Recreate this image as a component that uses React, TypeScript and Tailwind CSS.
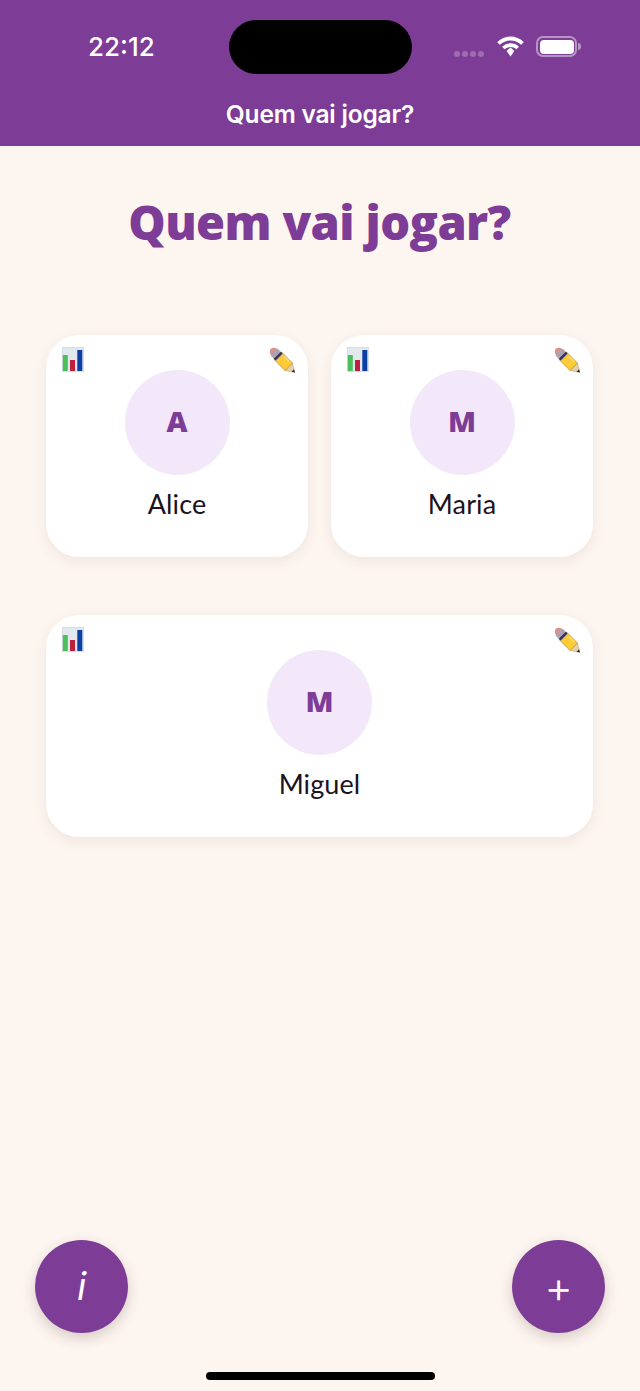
import React from "react";

interface Player {
  name: string;
  wide?: boolean;
}

const players: Player[] = [
  { name: "Alice" },
  { name: "Maria" },
  { name: "Miguel", wide: true },
];

const ChartIcon = () => (
  <svg width="22" height="25" viewBox="0 0 22 25" className="block">
    <rect x="0.25" y="0.25" width="21.5" height="24.5" fill="#e1e8ee" stroke="#c9d0d6" strokeWidth="0.5" />
    <rect x="0.8" y="8" width="5" height="16" fill="#4cbf5c" />
    <rect x="8" y="13" width="5" height="11" fill="#bd1f3c" />
    <rect x="15.3" y="3" width="5" height="21" fill="#0b3fa3" />
  </svg>
);

const PencilIcon = () => (
  <svg width="27" height="27" viewBox="0 0 27 27" className="block">
    <path d="M23.5 16 L25.8 25.5 L16 23.5 Z" fill="#e3cfa8" stroke="#a58a5c" strokeWidth="0.4" />
    <path d="M25.8 25.5 L22.6 24.8 L25.1 22.3 Z" fill="#2a2140" />
    <path d="M12.5 5 L23.5 16 L16 23.5 L5 12.5 Z" fill="#fdcb33" stroke="#a87d28" strokeWidth="0.6" />
    <path d="M15 9.5 L20 14.5" stroke="#fbe08a" strokeWidth="1.2" />
    <circle cx="4.8" cy="4.8" r="4" fill="#d8938a" />
    <path d="M8.5 1.5 L14 7 L7 14 L1.5 8.5 Z" fill="#a9a3b8" />
    <path d="M11.8 4.8 L13.5 6.5 L6.5 13.5 L4.8 11.8 Z" fill="#3a3350" />
    <path d="M2.5 2.5 C3.5 1 5.5 0.7 7 1.5 L1.8 6.8 C1 5.5 1.5 3.5 2.5 2.5 Z" fill="#d8938a" />
  </svg>
);

const WifiIcon = () => (
  <svg width="27" height="21" viewBox="0 0 27 21" className="block">
    <path d="M1.5 7.5 C8.5 0.8 18.5 0.8 25.5 7.5" fill="none" stroke="white" strokeWidth="3.8" />
    <path d="M6.3 12 C10.5 8.2 16.5 8.2 20.7 12" fill="none" stroke="white" strokeWidth="3.6" />
    <path d="M9.6 15 L13.5 11.4 L17.4 15 L13.5 20.5 Z" fill="white" />
  </svg>
);

const PlayerCard = ({ name, wide }: Player) => (
  <div
    className={`relative h-[222px] rounded-[33px] bg-white pt-[35px] flex flex-col items-center shadow-[0_4px_14px_rgba(80,50,40,0.08)] ${
      wide ? "col-span-2" : ""
    }`}
  >
    <div className="absolute left-[16px] top-[12px]">
      <ChartIcon />
    </div>
    <div className="absolute right-[12px] top-[12px]">
      <PencilIcon />
    </div>
    <div className="w-[105px] h-[105px] rounded-full bg-[#f2e8f9] flex items-center justify-center pb-[3px] text-[#7d3c96] text-[29px] font-extrabold font-['Open_Sans',sans-serif]">
      {name[0]}
    </div>
    <p className="mt-[11px] text-[27px] leading-[36px] tracking-[0.1px] text-[#1c1220] font-['Lato',sans-serif]">
      {name}
    </p>
  </div>
);

const App: React.FC = () => {
  return (
    <div className="relative h-[1391px] overflow-hidden bg-[#fdf5f0] flex flex-col">
      <header className="h-[146px] bg-[#7d3c96] text-white font-['Inter',sans-serif]">
        <div className="relative h-[94px] pt-[20px]">
          <span className="absolute left-[88px] top-[31px] text-[26px] leading-[32px] font-medium">22:12</span>
          <div className="mx-auto w-[183px] h-[54px] rounded-[27px] bg-black" />
          <div className="absolute left-[454px] top-[51px] flex gap-[2.5px]">
            <span className="w-[5.5px] h-[5.5px] rounded-full bg-white/25" />
            <span className="w-[5.5px] h-[5.5px] rounded-full bg-white/25" />
            <span className="w-[5.5px] h-[5.5px] rounded-full bg-white/25" />
            <span className="w-[5.5px] h-[5.5px] rounded-full bg-white/25" />
          </div>
          <div className="absolute left-[497px] top-[36px]">
            <WifiIcon />
          </div>
          <div className="absolute left-[536px] top-[36px] flex items-center">
            <div className="w-[41px] h-[21px] rounded-[7px] border-2 border-white/45 p-[1.5px]">
              <div className="w-full h-full rounded-[4px] bg-white" />
            </div>
            <div className="ml-[1px] w-[2.5px] h-[7px] rounded-r-full bg-white/45" />
          </div>
        </div>
        <h2 className="text-center text-[24.5px] leading-[40px] font-semibold tracking-[-0.2px]">
          Quem vai jogar?
        </h2>
      </header>

      <main className="flex-1 pl-[46px] pr-[47px]">
        <h1 className="mt-[44px] text-center text-[#7d3c96] text-[47px] leading-[64px] font-extrabold font-['Open_Sans',sans-serif] tracking-[-0.6px]">
          Quem vai jogar?
        </h1>
        <div className="mt-[81px] grid grid-cols-2 gap-x-[23px] gap-y-[58px]">
          {players.map((player) => (
            <PlayerCard key={player.name} {...player} />
          ))}
        </div>
      </main>

      <button className="absolute left-[35px] top-[1240px] w-[93px] h-[93px] rounded-full bg-[#7d3c96] text-white shadow-[0_5px_14px_rgba(60,40,30,0.2)] flex items-center justify-center text-[38px] italic font-['Inter',sans-serif]">
        i
      </button>
      <button className="absolute left-[512px] top-[1240px] w-[93px] h-[93px] rounded-full bg-[#7d3c96] text-white shadow-[0_5px_14px_rgba(60,40,30,0.2)] flex items-center justify-center text-[44px] font-light font-['Inter',sans-serif]">
        +
      </button>
      <div className="absolute left-[206px] top-[1372px] w-[229px] h-[8px] rounded-full bg-black" />
    </div>
  );
};

export default App;
